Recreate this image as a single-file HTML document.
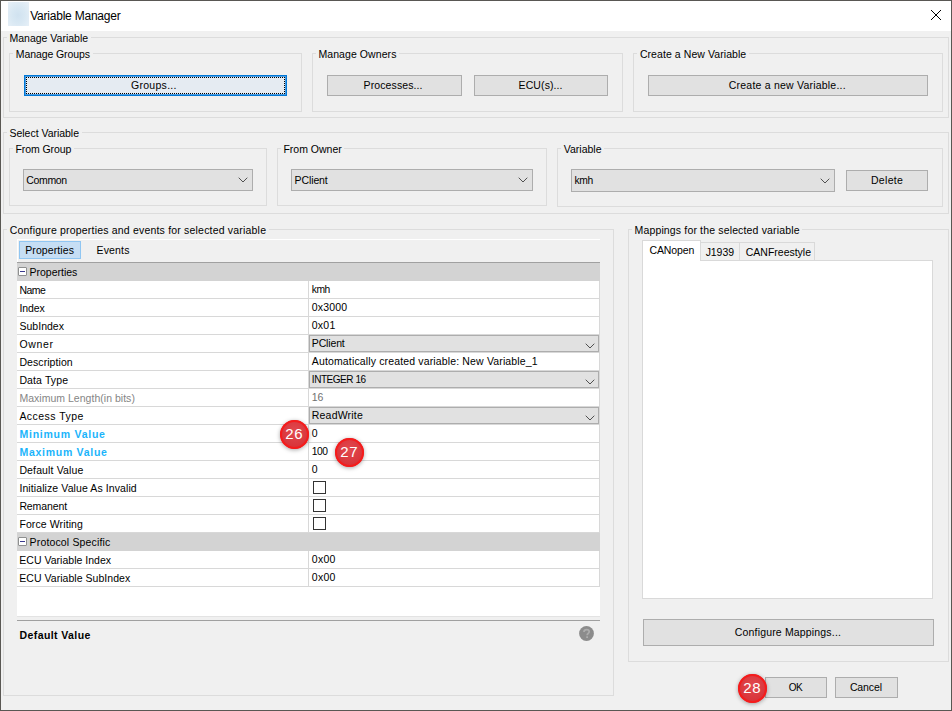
<!DOCTYPE html>
<html><head><meta charset="utf-8"><style>
html,body{margin:0;padding:0;}
body{width:952px;height:711px;position:relative;overflow:hidden;background:#f0f0f0;font-family:"Liberation Sans",sans-serif;color:#000;}
div,span,svg{position:absolute;}
.t{white-space:nowrap;}
.badge{border-radius:50%;background:radial-gradient(circle at 50% 40%,#e24a4f 0%,#d9363c 60%,#cf2a30 100%);box-shadow:0 0 0 2px #f51c1c inset,0 1px 4px rgba(0,0,0,0.35);}
.badge span{left:0;right:0;top:-0.5px;bottom:0;text-align:center;color:#fff;font-size:15px;line-height:29px;letter-spacing:0.6px;text-indent:0.6px;}
</style></head><body>

<div style="left:0px;top:0px;width:952px;height:711px;border:1px solid #595753;box-sizing:border-box;"></div>
<div style="left:1px;top:1px;width:950px;height:30px;background:#fff;"></div>
<div style="left:8px;top:2px;width:21px;height:24px;background:radial-gradient(ellipse at 48% 55%,#d0e2f0 0%,#d9e8f3 45%,#e9f1f8 100%);"></div>
<span class="t" style="left:30.20px;top:8.94px;font-size:12px;line-height:15px;letter-spacing:-0.223px;">Variable Manager</span>
<svg style="left:930px;top:9px" width="12" height="12" viewBox="0 0 12 12"><path d="M1 1 L11 11 M11 1 L1 11" stroke="#000" stroke-width="1"/></svg>
<div style="left:3px;top:37px;width:946px;height:81px;border:1px solid #dcdcdc;box-sizing:border-box;"></div>
<div style="left:7px;top:37px;width:84px;height:1px;background:#f0f0f0;"></div>
<span class="t" style="left:9.50px;top:31.96px;font-size:10.5px;line-height:13px;">Manage Variable</span>
<div style="left:9px;top:53px;width:293px;height:59px;border:1px solid #dcdcdc;box-sizing:border-box;"></div>
<div style="left:13px;top:53px;width:80px;height:1px;background:#f0f0f0;"></div>
<span class="t" style="left:15.80px;top:47.66px;font-size:10.5px;line-height:13px;letter-spacing:-0.090px;">Manage Groups</span>
<div style="left:24px;top:75px;width:263px;height:21px;border:1px solid #0078d7;box-shadow:inset 0 0 0 1px #4c9be0;background:#e5ebf2;box-sizing:border-box;"></div>
<div style="left:26px;top:77px;width:259px;height:17px;border:1px dotted #000;box-sizing:border-box;"></div>
<span class="t" style="left:131.00px;top:78.86px;font-size:10.5px;line-height:13px;letter-spacing:0.287px;">Groups...</span>
<div style="left:312px;top:53px;width:311px;height:59px;border:1px solid #dcdcdc;box-sizing:border-box;"></div>
<div style="left:316px;top:53px;width:83px;height:1px;background:#f0f0f0;"></div>
<span class="t" style="left:318.40px;top:47.96px;font-size:10.5px;line-height:13px;letter-spacing:0.082px;">Manage Owners</span>
<div style="left:327px;top:75px;width:135px;height:21px;border:1px solid #adadad;background:#e1e1e1;box-sizing:border-box;"></div>
<span class="t" style="left:363.60px;top:78.86px;font-size:10.5px;line-height:13px;letter-spacing:0.105px;">Processes...</span>
<div style="left:474px;top:75px;width:134px;height:21px;border:1px solid #adadad;background:#e1e1e1;box-sizing:border-box;"></div>
<span class="t" style="left:518.60px;top:78.86px;font-size:10.5px;line-height:13px;letter-spacing:0.093px;">ECU(s)...</span>
<div style="left:633px;top:53px;width:310px;height:59px;border:1px solid #dcdcdc;box-sizing:border-box;"></div>
<div style="left:637px;top:53px;width:112px;height:1px;background:#f0f0f0;"></div>
<span class="t" style="left:639.90px;top:47.86px;font-size:10.5px;line-height:13px;letter-spacing:0.073px;">Create a New Variable</span>
<div style="left:648px;top:75px;width:280px;height:21px;border:1px solid #adadad;background:#e1e1e1;box-sizing:border-box;"></div>
<span class="t" style="left:728.80px;top:78.86px;font-size:10.5px;line-height:13px;letter-spacing:0.214px;">Create a new Variable...</span>
<div style="left:3px;top:132px;width:946px;height:82px;border:1px solid #dcdcdc;box-sizing:border-box;"></div>
<div style="left:7px;top:132px;width:75px;height:1px;background:#f0f0f0;"></div>
<span class="t" style="left:9.50px;top:127.16px;font-size:10.5px;line-height:13px;letter-spacing:-0.023px;">Select Variable</span>
<div style="left:9px;top:148px;width:258px;height:58px;border:1px solid #dcdcdc;box-sizing:border-box;"></div>
<div style="left:13px;top:148px;width:61px;height:1px;background:#f0f0f0;"></div>
<span class="t" style="left:15.50px;top:143.16px;font-size:10.5px;line-height:13px;letter-spacing:-0.077px;">From Group</span>
<div style="left:23px;top:169px;width:230px;height:22px;border:1px solid #adadad;background:#e1e1e1;box-sizing:border-box;"></div>
<span class="t" style="left:26.20px;top:173.86px;font-size:10.5px;line-height:13px;letter-spacing:-0.316px;">Common</span>
<svg style="left:238px;top:177px" width="10" height="6" viewBox="0 0 10 6"><path d="M0.7 0.7 L5 5 L9.3 0.7" fill="none" stroke="#505050" stroke-width="1"/></svg>
<div style="left:277px;top:148px;width:270px;height:58px;border:1px solid #dcdcdc;box-sizing:border-box;"></div>
<div style="left:281px;top:148px;width:63px;height:1px;background:#f0f0f0;"></div>
<span class="t" style="left:283.40px;top:143.36px;font-size:10.5px;line-height:13px;">From Owner</span>
<div style="left:291px;top:169px;width:242px;height:22px;border:1px solid #adadad;background:#e1e1e1;box-sizing:border-box;"></div>
<span class="t" style="left:294.50px;top:173.86px;font-size:10.5px;line-height:13px;letter-spacing:-0.094px;">PClient</span>
<svg style="left:518px;top:177px" width="10" height="6" viewBox="0 0 10 6"><path d="M0.7 0.7 L5 5 L9.3 0.7" fill="none" stroke="#505050" stroke-width="1"/></svg>
<div style="left:557px;top:148px;width:386px;height:59px;border:1px solid #dcdcdc;box-sizing:border-box;"></div>
<div style="left:561px;top:148px;width:43px;height:1px;background:#f0f0f0;"></div>
<span class="t" style="left:563.80px;top:143.16px;font-size:10.5px;line-height:13px;">Variable</span>
<div style="left:571px;top:169px;width:264px;height:23px;border:1px solid #adadad;background:#e1e1e1;box-sizing:border-box;"></div>
<span class="t" style="left:574.60px;top:173.93px;font-size:10.317460317460318px;line-height:13px;letter-spacing:-0.450px;">kmh</span>
<svg style="left:820px;top:178px" width="10" height="6" viewBox="0 0 10 6"><path d="M0.7 0.7 L5 5 L9.3 0.7" fill="none" stroke="#505050" stroke-width="1"/></svg>
<div style="left:846px;top:170px;width:82px;height:21px;border:1px solid #adadad;background:#e1e1e1;box-sizing:border-box;"></div>
<span class="t" style="left:871.00px;top:174.16px;font-size:10.5px;line-height:13px;letter-spacing:0.291px;">Delete</span>
<div style="left:3px;top:229px;width:611px;height:467px;border:1px solid #dcdcdc;box-sizing:border-box;"></div>
<div style="left:7px;top:229px;width:262px;height:1px;background:#f0f0f0;"></div>
<span class="t" style="left:9.70px;top:223.86px;font-size:10.5px;line-height:13px;letter-spacing:0.192px;">Configure properties and events for selected variable</span>
<div style="left:17px;top:239px;width:583px;height:23px;background:#f0f0f0;border-top:1px solid #fff;border-left:1px solid #fff;box-sizing:border-box;"></div>
<div style="left:19px;top:241px;width:62px;height:18px;background:#c6def4;border:1px solid #90c6f2;box-sizing:border-box;"></div>
<span class="t" style="left:25.20px;top:243.86px;font-size:10.5px;line-height:13px;letter-spacing:0.102px;">Properties</span>
<span class="t" style="left:96.50px;top:243.86px;font-size:10.5px;line-height:13px;letter-spacing:0.164px;">Events</span>
<div style="left:17px;top:262px;width:583px;height:1px;background:#a0a0a0;"></div>
<div style="left:17px;top:263px;width:583px;height:354px;background:#fff;"></div>
<div style="left:17px;top:616px;width:583px;height:1px;background:#e3e3e3;"></div>
<div style="left:17px;top:620px;width:583px;height:1px;background:#a0a0a0;"></div>
<div style="left:17px;top:263px;width:583px;height:18px;background:#d3d3d3;"></div>
<div style="left:18px;top:267px;width:9px;height:9px;border:1px solid #8e8f8f;border-radius:1px;box-sizing:border-box;background:#fff;"><div style="left:1px;top:3px;width:5px;height:1px;background:#3b3b8f;"></div></div>
<span class="t" style="left:29.60px;top:265.86px;font-size:10.5px;line-height:13px;letter-spacing:-0.020px;">Properties</span>
<div style="left:17px;top:298px;width:583px;height:1px;background:#d8d8d8;"></div>
<div style="left:308px;top:281px;width:1px;height:18px;background:#d8d8d8;"></div>
<div style="left:599px;top:281px;width:1px;height:18px;background:#d8d8d8;"></div>
<span class="t" style="left:19.40px;top:283.87px;font-size:10.46816479400749px;line-height:13px;letter-spacing:-0.450px;">Name</span>
<span class="t" style="left:311.80px;top:282.93px;font-size:10.317460317460318px;line-height:13px;letter-spacing:-0.450px;">kmh</span>
<div style="left:17px;top:316px;width:583px;height:1px;background:#d8d8d8;"></div>
<div style="left:308px;top:299px;width:1px;height:18px;background:#d8d8d8;"></div>
<div style="left:599px;top:299px;width:1px;height:18px;background:#d8d8d8;"></div>
<span class="t" style="left:19.40px;top:301.86px;font-size:10.5px;line-height:13px;letter-spacing:-0.093px;">Index</span>
<span class="t" style="left:311.80px;top:300.86px;font-size:10.5px;line-height:13px;letter-spacing:0.152px;">0x3000</span>
<div style="left:17px;top:334px;width:583px;height:1px;background:#d8d8d8;"></div>
<div style="left:308px;top:317px;width:1px;height:18px;background:#d8d8d8;"></div>
<div style="left:599px;top:317px;width:1px;height:18px;background:#d8d8d8;"></div>
<span class="t" style="left:19.40px;top:319.86px;font-size:10.5px;line-height:13px;letter-spacing:0.034px;">SubIndex</span>
<span class="t" style="left:311.80px;top:318.86px;font-size:10.5px;line-height:13px;letter-spacing:0.238px;">0x01</span>
<div style="left:17px;top:352px;width:583px;height:1px;background:#d8d8d8;"></div>
<div style="left:308px;top:335px;width:1px;height:18px;background:#d8d8d8;"></div>
<div style="left:599px;top:335px;width:1px;height:18px;background:#d8d8d8;"></div>
<div style="left:309px;top:335px;width:290px;height:17px;border:1px solid #adadad;background:#e1e1e1;box-sizing:border-box;"></div>
<span class="t" style="left:19.40px;top:337.86px;font-size:10.5px;line-height:13px;letter-spacing:0.694px;">Owner</span>
<span class="t" style="left:311.80px;top:336.86px;font-size:10.5px;line-height:13px;letter-spacing:-0.144px;">PClient</span>
<svg style="left:585px;top:343px" width="10" height="6" viewBox="0 0 10 6"><path d="M0.7 0.7 L5 5 L9.3 0.7" fill="none" stroke="#505050" stroke-width="1"/></svg>
<div style="left:17px;top:370px;width:583px;height:1px;background:#d8d8d8;"></div>
<div style="left:308px;top:353px;width:1px;height:18px;background:#d8d8d8;"></div>
<div style="left:599px;top:353px;width:1px;height:18px;background:#d8d8d8;"></div>
<span class="t" style="left:19.40px;top:355.86px;font-size:10.5px;line-height:13px;letter-spacing:0.080px;">Description</span>
<span class="t" style="left:311.80px;top:354.86px;font-size:10.5px;line-height:13px;letter-spacing:0.146px;">Automatically created variable: New Variable_1</span>
<div style="left:17px;top:388px;width:583px;height:1px;background:#d8d8d8;"></div>
<div style="left:308px;top:371px;width:1px;height:18px;background:#d8d8d8;"></div>
<div style="left:599px;top:371px;width:1px;height:18px;background:#d8d8d8;"></div>
<div style="left:309px;top:371px;width:290px;height:17px;border:1px solid #adadad;background:#e1e1e1;box-sizing:border-box;"></div>
<span class="t" style="left:19.40px;top:373.86px;font-size:10.5px;line-height:13px;letter-spacing:0.116px;">Data Type</span>
<span class="t" style="left:311.80px;top:373.03px;font-size:10.017137960582689px;line-height:13px;letter-spacing:-0.450px;">INTEGER 16</span>
<svg style="left:585px;top:379px" width="10" height="6" viewBox="0 0 10 6"><path d="M0.7 0.7 L5 5 L9.3 0.7" fill="none" stroke="#505050" stroke-width="1"/></svg>
<div style="left:17px;top:406px;width:583px;height:1px;background:#d8d8d8;"></div>
<div style="left:308px;top:389px;width:1px;height:18px;background:#d8d8d8;"></div>
<div style="left:599px;top:389px;width:1px;height:18px;background:#d8d8d8;"></div>
<span class="t" style="left:19.40px;top:391.86px;font-size:10.5px;line-height:13px;letter-spacing:0.024px;color:#858585;">Maximum Length(in bits)</span>
<span class="t" style="left:311.80px;top:390.86px;font-size:10.5px;line-height:13px;letter-spacing:-0.255px;color:#6f6f6f;">16</span>
<div style="left:17px;top:424px;width:583px;height:1px;background:#d8d8d8;"></div>
<div style="left:308px;top:407px;width:1px;height:18px;background:#d8d8d8;"></div>
<div style="left:599px;top:407px;width:1px;height:18px;background:#d8d8d8;"></div>
<div style="left:309px;top:407px;width:290px;height:17px;border:1px solid #adadad;background:#e1e1e1;box-sizing:border-box;"></div>
<span class="t" style="left:19.40px;top:409.86px;font-size:10.5px;line-height:13px;letter-spacing:0.457px;">Access Type</span>
<span class="t" style="left:311.80px;top:408.86px;font-size:10.5px;line-height:13px;letter-spacing:0.200px;">ReadWrite</span>
<svg style="left:585px;top:415px" width="10" height="6" viewBox="0 0 10 6"><path d="M0.7 0.7 L5 5 L9.3 0.7" fill="none" stroke="#505050" stroke-width="1"/></svg>
<div style="left:17px;top:442px;width:583px;height:1px;background:#d8d8d8;"></div>
<div style="left:308px;top:425px;width:1px;height:18px;background:#d8d8d8;"></div>
<div style="left:599px;top:425px;width:1px;height:18px;background:#d8d8d8;"></div>
<span class="t" style="left:19.50px;top:427.86px;font-size:10.5px;line-height:13px;font-weight:bold;letter-spacing:0.747px;color:#1ab4fb;">Minimum Value</span>
<span class="t" style="left:311.80px;top:426.86px;font-size:10.5px;line-height:13px;">0</span>
<div style="left:17px;top:460px;width:583px;height:1px;background:#d8d8d8;"></div>
<div style="left:308px;top:443px;width:1px;height:18px;background:#d8d8d8;"></div>
<div style="left:599px;top:443px;width:1px;height:18px;background:#d8d8d8;"></div>
<span class="t" style="left:19.50px;top:445.86px;font-size:10.5px;line-height:13px;font-weight:bold;letter-spacing:0.716px;color:#1ab4fb;">Maximum Value</span>
<span class="t" style="left:311.80px;top:444.93px;font-size:10.29940119760479px;line-height:13px;letter-spacing:-0.450px;">100</span>
<div style="left:17px;top:478px;width:583px;height:1px;background:#d8d8d8;"></div>
<div style="left:308px;top:461px;width:1px;height:18px;background:#d8d8d8;"></div>
<div style="left:599px;top:461px;width:1px;height:18px;background:#d8d8d8;"></div>
<span class="t" style="left:19.40px;top:463.86px;font-size:10.5px;line-height:13px;letter-spacing:0.136px;">Default Value</span>
<span class="t" style="left:311.80px;top:462.86px;font-size:10.5px;line-height:13px;">0</span>
<div style="left:17px;top:496px;width:583px;height:1px;background:#d8d8d8;"></div>
<div style="left:308px;top:479px;width:1px;height:18px;background:#d8d8d8;"></div>
<div style="left:599px;top:479px;width:1px;height:18px;background:#d8d8d8;"></div>
<span class="t" style="left:19.40px;top:481.86px;font-size:10.5px;line-height:13px;letter-spacing:0.097px;">Initialize Value As Invalid</span>
<div style="left:313px;top:481px;width:13px;height:13px;border:1px solid #333;box-sizing:border-box;background:#fff;"></div>
<div style="left:17px;top:514px;width:583px;height:1px;background:#d8d8d8;"></div>
<div style="left:308px;top:497px;width:1px;height:18px;background:#d8d8d8;"></div>
<div style="left:599px;top:497px;width:1px;height:18px;background:#d8d8d8;"></div>
<span class="t" style="left:19.40px;top:499.86px;font-size:10.5px;line-height:13px;letter-spacing:-0.108px;">Remanent</span>
<div style="left:313px;top:499px;width:13px;height:13px;border:1px solid #333;box-sizing:border-box;background:#fff;"></div>
<div style="left:17px;top:532px;width:583px;height:1px;background:#d8d8d8;"></div>
<div style="left:308px;top:515px;width:1px;height:18px;background:#d8d8d8;"></div>
<div style="left:599px;top:515px;width:1px;height:18px;background:#d8d8d8;"></div>
<span class="t" style="left:19.40px;top:517.86px;font-size:10.5px;line-height:13px;letter-spacing:0.107px;">Force Writing</span>
<div style="left:313px;top:517px;width:13px;height:13px;border:1px solid #333;box-sizing:border-box;background:#fff;"></div>
<div style="left:17px;top:533px;width:583px;height:18px;background:#d3d3d3;"></div>
<div style="left:18px;top:537px;width:9px;height:9px;border:1px solid #8e8f8f;border-radius:1px;box-sizing:border-box;background:#fff;"><div style="left:1px;top:3px;width:5px;height:1px;background:#3b3b8f;"></div></div>
<span class="t" style="left:29.60px;top:535.86px;font-size:10.5px;line-height:13px;letter-spacing:0.155px;">Protocol Specific</span>
<div style="left:17px;top:568px;width:583px;height:1px;background:#d8d8d8;"></div>
<div style="left:308px;top:551px;width:1px;height:18px;background:#d8d8d8;"></div>
<div style="left:599px;top:551px;width:1px;height:18px;background:#d8d8d8;"></div>
<span class="t" style="left:19.30px;top:553.86px;font-size:10.5px;line-height:13px;letter-spacing:0.020px;">ECU Variable Index</span>
<span class="t" style="left:311.80px;top:552.86px;font-size:10.5px;line-height:13px;letter-spacing:0.272px;">0x00</span>
<div style="left:17px;top:586px;width:583px;height:1px;background:#d8d8d8;"></div>
<div style="left:308px;top:569px;width:1px;height:18px;background:#d8d8d8;"></div>
<div style="left:599px;top:569px;width:1px;height:18px;background:#d8d8d8;"></div>
<span class="t" style="left:19.30px;top:571.86px;font-size:10.5px;line-height:13px;letter-spacing:0.038px;">ECU Variable SubIndex</span>
<span class="t" style="left:311.80px;top:570.86px;font-size:10.5px;line-height:13px;letter-spacing:0.272px;">0x00</span>
<span class="t" style="left:19.50px;top:628.86px;font-size:10.5px;line-height:13px;font-weight:bold;letter-spacing:0.405px;">Default Value</span>
<svg style="left:579px;top:626px" width="15" height="15" viewBox="0 0 15 15"><circle cx="7.5" cy="7.5" r="7.4" fill="#8c8c8c"/><path d="M5 6.1 C5 4.4 6.2 3.7 7.6 3.7 C9.1 3.7 10.2 4.5 10.2 5.8 C10.2 7.3 8.1 7.5 8.1 9.3" fill="none" stroke="#adadad" stroke-width="1.7"/><rect x="7.2" y="10.3" width="1.8" height="1.7" fill="#adadad"/></svg>
<div style="left:628px;top:229px;width:321px;height:433px;border:1px solid #dcdcdc;box-sizing:border-box;"></div>
<div style="left:632px;top:229px;width:170px;height:1px;background:#f0f0f0;"></div>
<span class="t" style="left:634.50px;top:223.76px;font-size:10.5px;line-height:13px;letter-spacing:0.154px;">Mappings for the selected variable</span>
<div style="left:642px;top:260px;width:291px;height:339px;background:#fff;border:1px solid #d9d9d9;box-sizing:border-box;"></div>
<div style="left:700px;top:242px;width:40px;height:19px;background:#f0f0f0;border:1px solid #d9d9d9;box-sizing:border-box;"></div>
<div style="left:739px;top:242px;width:76px;height:19px;background:#f0f0f0;border:1px solid #d9d9d9;box-sizing:border-box;"></div>
<div style="left:642px;top:240px;width:59px;height:21px;background:#fff;border:1px solid #d9d9d9;border-bottom:none;box-sizing:border-box;"></div>
<div style="left:643px;top:260px;width:57px;height:1px;background:#fff;"></div>
<span class="t" style="left:649.50px;top:243.86px;font-size:10.5px;line-height:13px;letter-spacing:-0.120px;">CANopen</span>
<span class="t" style="left:705.70px;top:245.86px;font-size:10.5px;line-height:13px;letter-spacing:-0.078px;">J1939</span>
<span class="t" style="left:745.80px;top:245.86px;font-size:10.5px;line-height:13px;letter-spacing:-0.015px;">CANFreestyle</span>
<div style="left:643px;top:619px;width:291px;height:27px;border:1px solid #adadad;background:#e1e1e1;box-sizing:border-box;"></div>
<span class="t" style="left:734.80px;top:626.16px;font-size:10.5px;line-height:13px;letter-spacing:0.168px;">Configure Mappings...</span>
<div style="left:765px;top:677px;width:62px;height:21px;border:1px solid #adadad;background:#e1e1e1;box-sizing:border-box;"></div>
<span class="t" style="left:788.70px;top:680.71px;font-size:10.069204152249133px;line-height:13px;letter-spacing:-0.450px;">OK</span>
<div style="left:835px;top:677px;width:63px;height:21px;border:1px solid #adadad;background:#e1e1e1;box-sizing:border-box;"></div>
<span class="t" style="left:849.90px;top:680.56px;font-size:10.5px;line-height:13px;letter-spacing:-0.122px;">Cancel</span>
<div class="badge" style="left:279.5px;top:419.5px;width:29.0px;height:29.0px;"><span>26</span></div>
<div class="badge" style="left:334.5px;top:437.5px;width:29.0px;height:29.0px;"><span>27</span></div>
<div class="badge" style="left:737.5px;top:673.5px;width:29.0px;height:29.0px;"><span>28</span></div>
</body></html>
